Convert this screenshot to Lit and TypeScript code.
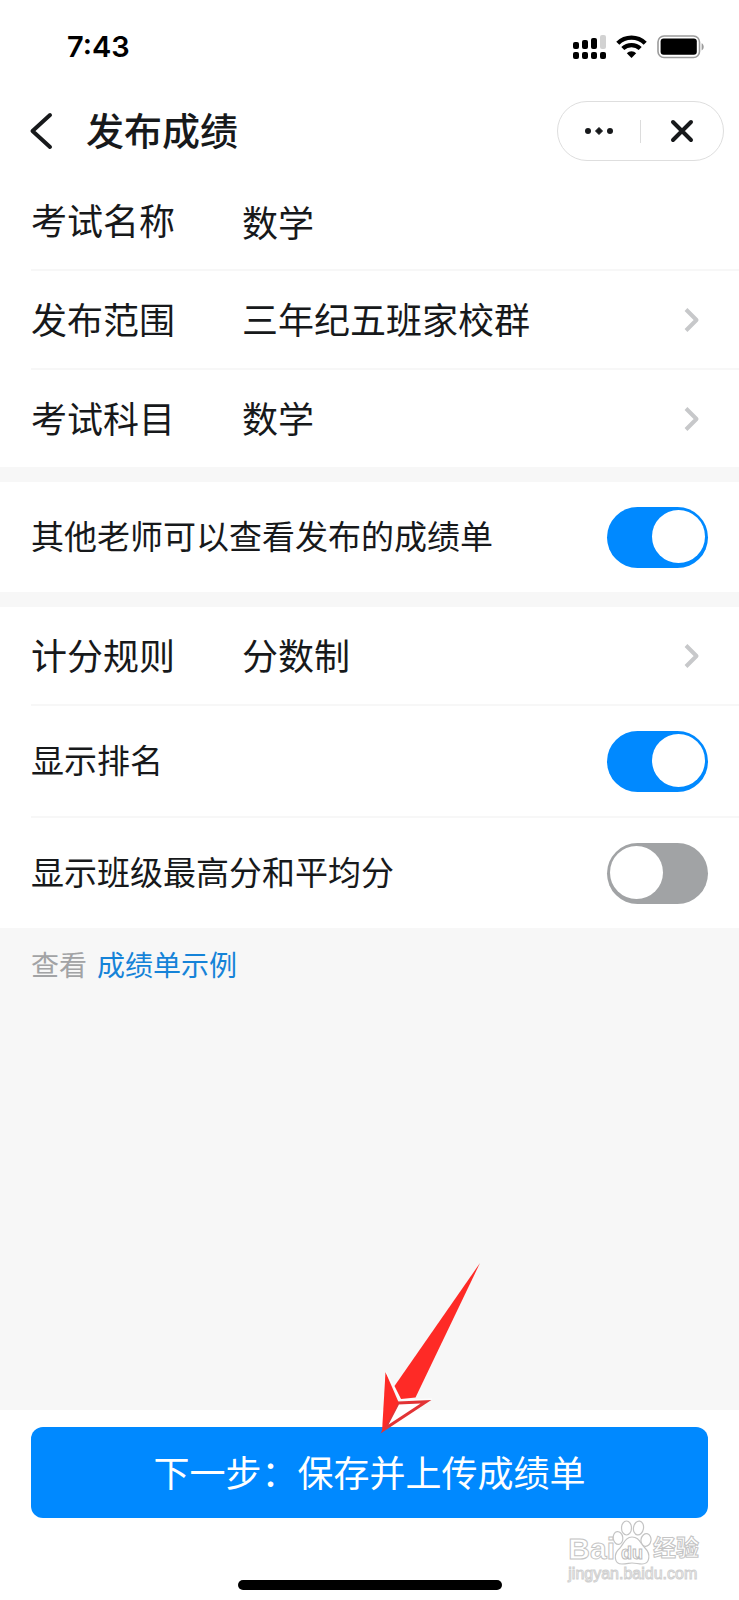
import { LitElement, html, css, svg } from "lit";
import { customElement, property, state } from "lit/decorators.js";

const chevronRight = html`<svg class="chevron" width="16" height="26" viewBox="0 0 16 26" aria-hidden="true">
  <path d="M2 2.5 L12.5 13 L2 23.5" fill="none" stroke="#c7c8ca" stroke-width="4" stroke-linejoin="round" />
</svg>`;

@customElement("status-bar")
class StatusBar extends LitElement {
  static styles = css`
    :host {
      display: flex;
      align-items: center;
      justify-content: space-between;
      height: 94px;
      padding: 0 34px 0 67px;
      box-sizing: border-box;
      color: #000;
    }
    .time {
      font: 600 29px/36px Inter, "Liberation Sans", sans-serif;
    }
    .icons {
      display: flex;
      align-items: center;
      gap: 10px;
    }
  `;

  render() {
    const columns = [0, 9, 18, 27];
    const tops = [7, 5, 3, 0];
    return html`
      <span class="time">7:43</span>
      <div class="icons">
        <svg width="33" height="24" viewBox="0 0 33 24" aria-label="信号">
          ${columns.map(
            (x, i) => svg`
              <rect x=${x} y=${tops[i]} width="6" height=${14 - tops[i]} rx="2" fill=${i === 3 ? "#d2d2d2" : "#000"} />
              <rect x=${x} y="17" width="6" height="7" rx="2" />`
          )}
        </svg>
        <svg width="31" height="24" viewBox="0 0 31 24" aria-label="无线网络">
          <path d="M1.8 8.2 A19.5 19.5 0 0 1 29.2 8.2" fill="none" stroke="#000" stroke-width="4.4" />
          <path d="M6.8 13.6 A12.4 12.4 0 0 1 24.2 13.6" fill="none" stroke="#000" stroke-width="4.2" />
          <path d="M15.5 23 L10.8 18.2 A6.6 6.6 0 0 1 20.2 18.2 Z" />
        </svg>
        <svg width="48" height="24" viewBox="0 0 48 24" aria-label="电池">
          <rect x="1" y="1" width="41.5" height="21.5" rx="6" fill="none" stroke="#9b9b9b" stroke-width="1.6" />
          <rect x="3.6" y="3.6" width="36.2" height="16.2" rx="3" />
          <path d="M44.6 8.2 C47.4 9.4 47.4 14.2 44.6 15.4 Z" fill="#9b9b9b" />
        </svg>
      </div>
    `;
  }
}

@customElement("nav-bar")
class NavBar extends LitElement {
  @property() heading = "";

  static styles = css`
    :host {
      display: flex;
      align-items: center;
      padding: 7px 15px 11px 26px;
    }
    button {
      display: flex;
      align-items: center;
      justify-content: center;
      margin: 0;
      padding: 0;
      border: 0;
      background: none;
    }
    .back {
      width: 32px;
      height: 60px;
    }
    .title {
      flex: 1;
      margin: 0 0 0 28px;
      padding-bottom: 4px;
      font-size: 38px;
      line-height: 56px;
      font-weight: 500;
    }
    .capsule {
      display: flex;
      align-items: center;
      box-sizing: border-box;
      width: 167px;
      height: 60px;
      border: 1px solid #dedede;
      border-radius: 30px;
    }
    .capsule button {
      flex: 1;
      height: 58px;
    }
    .divider {
      width: 1px;
      height: 23px;
      background: #dcdcdc;
    }
  `;

  render() {
    return html`
      <button class="back" aria-label="返回">
        <svg width="28" height="40" viewBox="0 0 28 40">
          <path d="M22 4 L4.5 20 L22 36" fill="none" stroke="#17191b" stroke-width="4" stroke-linecap="round" stroke-linejoin="round" />
        </svg>
      </button>
      <h1 class="title">${this.heading}</h1>
      <div class="capsule">
        <button aria-label="更多">
          <svg width="30" height="10" viewBox="0 0 30 10" fill="#17191b">
            <circle cx="4" cy="5" r="3" />
            <path d="M15 1.5 L18.500 5 L15 8.500 L11.500 5 Z" stroke="#17191b" stroke-linejoin="round" />
            <circle cx="26" cy="5" r="3" />
          </svg>
        </button>
        <span class="divider"></span>
        <button aria-label="关闭">
          <svg width="24" height="24" viewBox="0 0 24 24">
            <path d="M3 3 L21 21 M21 3 L3 21" stroke="#17191b" stroke-width="4" stroke-linecap="round" />
          </svg>
        </button>
      </div>
    `;
  }
}

@customElement("site-mark")
class SiteMark extends LitElement {
  static styles = css`
    :host {
      display: block;
      color: #fff;
      -webkit-text-stroke: 1px #c4c4c4;
      font-family: "Liberation Sans", "Noto Sans CJK SC", sans-serif;
    }
    .brand {
      display: flex;
      align-items: flex-end;
    }
    .latin {
      font-size: 30px;
      line-height: 32px;
      font-weight: 700;
    }
    .paw {
      margin: 0 1px 0 -3px;
    }
    .du {
      font: 700 18px "Liberation Sans", sans-serif;
      stroke: #bcbcbc;
      stroke-width: 1px;
    }
    .han {
      padding-bottom: 1px;
      font-size: 23px;
      line-height: 32px;
      font-weight: 700;
    }
    .site {
      font-size: 16px;
      line-height: 18px;
      -webkit-text-stroke: 1px #d0d0d0;
    }
  `;

  render() {
    return html`
      <div class="brand">
        <span class="latin">Bai</span>
        <svg class="paw" width="40" height="46" viewBox="0 0 40 46" aria-hidden="true">
          <g fill="#fff" stroke="#c4c4c4" stroke-width="1.2">
            <ellipse cx="6" cy="19" rx="4.8" ry="6.4" transform="rotate(-8 6 19)" />
            <ellipse cx="14.500" cy="9" rx="5" ry="7" />
            <ellipse cx="26.500" cy="9" rx="5" ry="7" transform="rotate(10 26.500 9)" />
            <ellipse cx="34" cy="21" rx="5" ry="6.4" transform="rotate(10 34 21)" />
            <path d="M20 18 C14 18 12 24 8 29 C1 35 2 45 10 45 C15 45 17 44 20 44 C24 44 26 45 30 45 C38 45 39 35 33 29 C28 24 27 18 20 18 Z" />
          </g>
          <text class="du" x="9" y="40" fill="#fff">du</text>
        </svg>
        <span class="han">经验</span>
      </div>
      <div class="site">jingyan.baidu.com</div>
    `;
  }
}

@customElement("app-root")
class AppRoot extends LitElement {
  @state() examName = "数学";
  @state() shared = true;
  @state() ranking = true;
  @state() classStats = false;

  static styles = css`
    :host {
      display: flex;
      flex-direction: column;
      min-height: 100vh;
      background: #fff;
      color: #17191b;
      font-family: "Noto Sans CJK SC", sans-serif;
    }
    .body {
      flex: 1;
      background: #f7f7f7;
    }
    .group {
      background: #fff;
      padding-left: 31px;
    }
    .group + .group {
      margin-top: 15px;
    }
    .row {
      display: flex;
      align-items: center;
      width: 100%;
      min-height: 97px;
      margin: 0;
      padding: 0 39px 0 0;
      border: 0;
      background: none;
      box-sizing: border-box;
      color: inherit;
      font-family: inherit;
      font-size: 36px;
      line-height: 52px;
      text-align: left;
    }
    .row:not(:last-child) {
      min-height: 99px;
      border-bottom: 2px solid #f7f7f7;
    }
    .name {
      flex: 0 0 211px;
    }
    .value {
      flex: 1;
      min-width: 0;
      margin: 0;
      padding: 0;
      border: 0;
      outline: 0;
      background: none;
      color: inherit;
      font: inherit;
    }
    label,
    span.name,
    span.value {
      padding-bottom: 4px;
    }
    .chevron {
      flex: none;
    }
    .row.toggle {
      justify-content: space-between;
      min-height: 110px;
      padding-right: 31px;
      font-size: 33px;
    }
    .row.toggle:not(:last-child) {
      min-height: 112px;
    }
    .switch {
      appearance: none;
      flex: none;
      box-sizing: border-box;
      width: 101px;
      height: 61px;
      margin: 0;
      padding: 3px;
      border-radius: 31px;
      background: #a1a3a5;
      display: flex;
      justify-content: flex-start;
    }
    .switch::before {
      content: "";
      width: 53px;
      height: 53px;
      border-radius: 50%;
      background: #fff;
    }
    .switch:checked {
      justify-content: flex-end;
      background: #0089ff;
    }
    .hint {
      display: flex;
      gap: 10px;
      margin: 0;
      padding: 16px 31px;
      color: #a2a3a5;
      font-size: 28px;
      line-height: 40px;
    }
    .hint a {
      color: #1583d8;
      text-decoration: none;
    }
    .footer {
      position: relative;
      display: flex;
      flex-direction: column;
      align-items: center;
      padding: 17px 31px 10px;
    }
    .next {
      width: 100%;
      margin: 0 0 62px;
      padding: 18px 0 21px;
      border: 0;
      border-radius: 12px;
      background: #0089ff;
      color: #fff;
      font-family: inherit;
      font-size: 36px;
      line-height: 52px;
    }
    .home {
      width: 264px;
      height: 10px;
      border-radius: 5px;
      background: #000;
    }
    .pointer {
      position: absolute;
      left: 50%;
      bottom: 165px;
      pointer-events: none;
    }
    .mark {
      position: absolute;
      right: 40px;
      bottom: 17px;
      pointer-events: none;
    }
  `;

  private picker(name: string, value: string) {
    return html`<button class="row">
      <span class="name">${name}</span>
      <span class="value">${value}</span>
      ${chevronRight}
    </button>`;
  }

  private toggle(id: string, text: string, on: boolean, change: (on: boolean) => void) {
    return html`<div class="row toggle">
      <label for=${id}>${text}</label>
      <input class="switch" id=${id} type="checkbox" role="switch" .checked=${on}
        @change=${(e: Event) => change((e.target as HTMLInputElement).checked)} />
    </div>`;
  }

  render() {
    return html`
      <status-bar></status-bar>
      <nav-bar heading="发布成绩"></nav-bar>
      <main class="body">
        <section class="group">
          <div class="row">
            <label class="name" for="exam">考试名称</label>
            <input class="value" id="exam" type="text" .value=${this.examName}
              @input=${(e: Event) => (this.examName = (e.target as HTMLInputElement).value)} />
          </div>
          ${this.picker("发布范围", "三年纪五班家校群")}
          ${this.picker("考试科目", "数学")}
        </section>
        <section class="group">
          ${this.toggle("shared", "其他老师可以查看发布的成绩单", this.shared, (on) => (this.shared = on))}
        </section>
        <section class="group">
          ${this.picker("计分规则", "分数制")}
          ${this.toggle("ranking", "显示排名", this.ranking, (on) => (this.ranking = on))}
          ${this.toggle("stats", "显示班级最高分和平均分", this.classStats, (on) => (this.classStats = on))}
        </section>
        <p class="hint">查看 <a href="#example">成绩单示例</a></p>
      </main>
      <footer class="footer">
        <button class="next">下一步：保存并上传成绩单</button>
        <div class="home"></div>
        <svg class="pointer" width="120" height="180" viewBox="0 0 120 180" aria-hidden="true">
          <path d="M110 8 L45.500 142.500 L31 144 L24.500 131 Z" fill="#fe2a26" />
          <path d="M28 148 L56 146.800 L14.500 174 Z" fill="#fff" stroke="#e23335" stroke-width="3" />
          <path d="M15.500 117 L28.500 147 L12 177 Z" fill="#fe2a26" />
          <path d="M16 117 L30.500 145 L62 144" fill="none" stroke="#fff" stroke-width="1" />
        </svg>
        <site-mark class="mark"></site-mark>
      </footer>
    `;
  }
}
